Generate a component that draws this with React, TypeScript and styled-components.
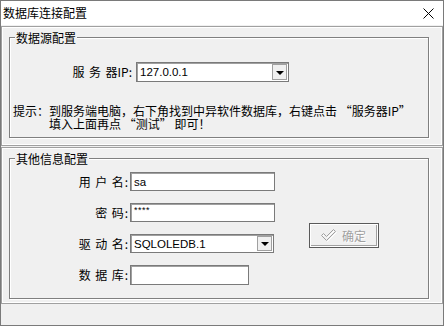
import styled, { createGlobalStyle } from "styled-components";

const GlobalStyle = createGlobalStyle`
  html, body {
    margin: 0;
    padding: 0;
    background: #ffffff;
  }
`;

const Window = styled.div`
  width: 444px;
  height: 326px;
  box-sizing: border-box;
  border: 1px solid #7a7a7a;
  background: #f0f0f0;
  display: flex;
  flex-direction: column;
  font-family: "Noto Sans CJK SC", "Liberation Sans", sans-serif;
  font-size: 12px;
  color: #000;
  overflow: hidden;
`;

const TitleBar = styled.div`
  height: 24px;
  flex: none;
  background: #fff;
  display: flex;
  align-items: center;
  justify-content: space-between;
  padding: 0 9px 0 2px;
  line-height: 14px;
`;

const Body = styled.div`
  flex: 1;
  display: flex;
  flex-direction: column;
  padding-top: 1px;
`;

const Panel = styled.div<{ $height: number }>`
  height: ${(p) => p.$height}px;
  flex: none;
  box-sizing: border-box;
  border: 1px solid #a0a0a0;
  box-shadow: inset 0 0 0 1px #fff;
  padding: 10px 0 0 7px;
  margin-bottom: 1px;
`;

const Group = styled.div<{ $height: number }>`
  width: 420px;
  height: ${(p) => p.$height}px;
  box-sizing: border-box;
  border: 1px solid #7f7f7f;
  box-shadow: 1px 1px 0 #fff, inset 1px 1px 0 #fff;
`;

const GroupTitle = styled.div`
  display: table;
  margin: -7px 0 0 5px;
  padding: 0 1px;
  line-height: 13px;
  background: #f0f0f0;
`;

const SourceRow = styled.div`
  display: flex;
  align-items: center;
  height: 20px;
  margin-top: 18px;
`;

const Label = styled.div<{ $width: number }>`
  width: ${(p) => p.$width}px;
  display: flex;
  justify-content: flex-end;
  align-items: center;
  white-space: nowrap;
  line-height: 14px;
`;

// spreads the CJK characters of a label at a 16px pitch, without trailing space
const Spread = styled.span<{ $chars: number }>`
  display: inline-block;
  width: ${(p) => p.$chars * 12 + (p.$chars - 1) * 4.5}px;
  text-align: justify;
  text-align-last: justify;
`;

const Colon = styled.span`
  margin-left: 1px;
`;

const Combo = styled.div<{ $width: number }>`
  width: ${(p) => p.$width}px;
  height: 100%;
  box-sizing: border-box;
  margin-left: ${(p) => (p.$width > 150 ? 4 : 0)}px;
  border: 1px solid #7a7a7a;
  box-shadow: inset 1px 1px 0 #a0a0a0;
  background: #fff;
  display: flex;
  align-items: center;
  justify-content: space-between;
  padding: 1px 1px 1px 3px;
`;

const Value = styled.span`
  font-family: "Liberation Sans", sans-serif;
  font-size: 11.5px;
  line-height: 14px;
`;

const DropButton = styled.div`
  width: 15px;
  height: 100%;
  box-sizing: border-box;
  background: #f0f0f0;
  border: 1px solid #a0a0a0;
  display: flex;
  align-items: center;
  justify-content: center;
`;

const Arrow = styled.div`
  width: 0;
  height: 0;
  border-left: 4px solid transparent;
  border-right: 4px solid transparent;
  border-top: 4px solid #000;
  margin-top: 1px;
`;

const Hint = styled.div`
  display: flex;
  margin-top: 22px;
  padding-left: 3px;
  line-height: 13px;
  white-space: nowrap;
`;

const HintPrefix = styled.span`
  width: 36px;
  flex: none;
`;

const OtherContent = styled.div`
  display: flex;
  align-items: flex-start;
`;

const Form = styled.div`
  display: grid;
  grid-template-columns: 118px auto;
  grid-template-rows: 19px 19px 19px 20px;
  column-gap: 2px;
  row-gap: 12px;
  align-items: center;
  margin-top: 7px;
`;

const Field = styled.div<{ $width: number }>`
  width: ${(p) => p.$width}px;
  height: 100%;
  box-sizing: border-box;
  border: 1px solid #7a7a7a;
  box-shadow: inset 1px 1px 0 #a0a0a0;
  background: #fff;
  padding: 0 3px;
  display: flex;
  align-items: center;
`;

const Masked = styled.span`
  font-family: "Liberation Sans", sans-serif;
  font-size: 9px;
  line-height: 9px;
  letter-spacing: 0.5px;
  align-self: flex-start;
  margin-top: 2px;
`;

const OkButton = styled.div`
  width: 70px;
  height: 25px;
  box-sizing: border-box;
  margin: 58px 0 0 34px;
  border: 1px solid #5a5a5a;
  box-shadow: inset 0 0 0 1px #fff, inset -2px -2px 0 #a0a0a0;
  background: #f0f0f0;
  color: #a0a0a0;
  display: flex;
  align-items: center;
  gap: 5px;
  padding-left: 11px;
  line-height: 14px;
  text-shadow: 1px 1px 0 #fff;
`;

const Footer = styled.div`
  flex: 1;
`;

function CloseIcon() {
  return (
    <svg width="11" height="11" viewBox="0 0 11 11">
      <path d="M0.5 0.5 L10.5 10.5 M10.5 0.5 L0.5 10.5" stroke="#000" strokeWidth="1" />
    </svg>
  );
}

function CheckIcon() {
  return (
    <svg width="16" height="16" viewBox="0 0 16 16">
      <polygon points="1.5,8.5 3.5,6.5 6.5,9.5 13.5,2.5 15.5,4.5 6.5,13.5" fill="none" stroke="#fff" />
      <polygon points="0.5,7.5 2.5,5.5 5.5,8.5 12.5,1.5 14.5,3.5 5.5,12.5" fill="none" stroke="#a0a0a0" />
    </svg>
  );
}

function FormLabel({ text, width }: { text: string; width: number }) {
  return (
    <Label $width={width}>
      <Spread $chars={text.length}>{text}</Spread>
      <Colon>:</Colon>
    </Label>
  );
}

export default function App() {
  return (
    <>
      <GlobalStyle />
      <Window lang="zh-CN">
        <TitleBar>
          <span>数据库连接配置</span>
          <CloseIcon />
        </TitleBar>
        <Body>
          <Panel $height={120}>
            <Group $height={101}>
              <GroupTitle>数据源配置</GroupTitle>
              <SourceRow>
                <Label $width={122}>
                  <Spread $chars={3}>服务器</Spread>
                  <span>IP:</span>
                </Label>
                <Combo $width={153}>
                  <Value>127.0.0.1</Value>
                  <DropButton>
                    <Arrow />
                  </DropButton>
                </Combo>
              </SourceRow>
              <Hint>
                <HintPrefix>提示：</HintPrefix>
                <span>
                  到服务端电脑，右下角找到中异软件数据库，右键点击 “服务器IP”
                  <br />
                  填入上面再点 “测试” 即可！
                </span>
              </Hint>
            </Group>
          </Panel>
          <Panel $height={157}>
            <Group $height={141}>
              <GroupTitle>其他信息配置</GroupTitle>
              <OtherContent>
                <Form>
                  <FormLabel text="用户名" width={118} />
                  <Field $width={145}>
                    <Value>sa</Value>
                  </Field>
                  <FormLabel text="密码" width={118} />
                  <Field $width={145}>
                    <Masked>****</Masked>
                  </Field>
                  <FormLabel text="驱动名" width={118} />
                  <Combo $width={144}>
                    <Value>SQLOLEDB.1</Value>
                    <DropButton>
                      <Arrow />
                    </DropButton>
                  </Combo>
                  <FormLabel text="数据库" width={118} />
                  <Field $width={119} />
                </Form>
                <OkButton>
                  <CheckIcon />
                  <span>确定</span>
                </OkButton>
              </OtherContent>
            </Group>
          </Panel>
          <Footer />
        </Body>
      </Window>
    </>
  );
}
